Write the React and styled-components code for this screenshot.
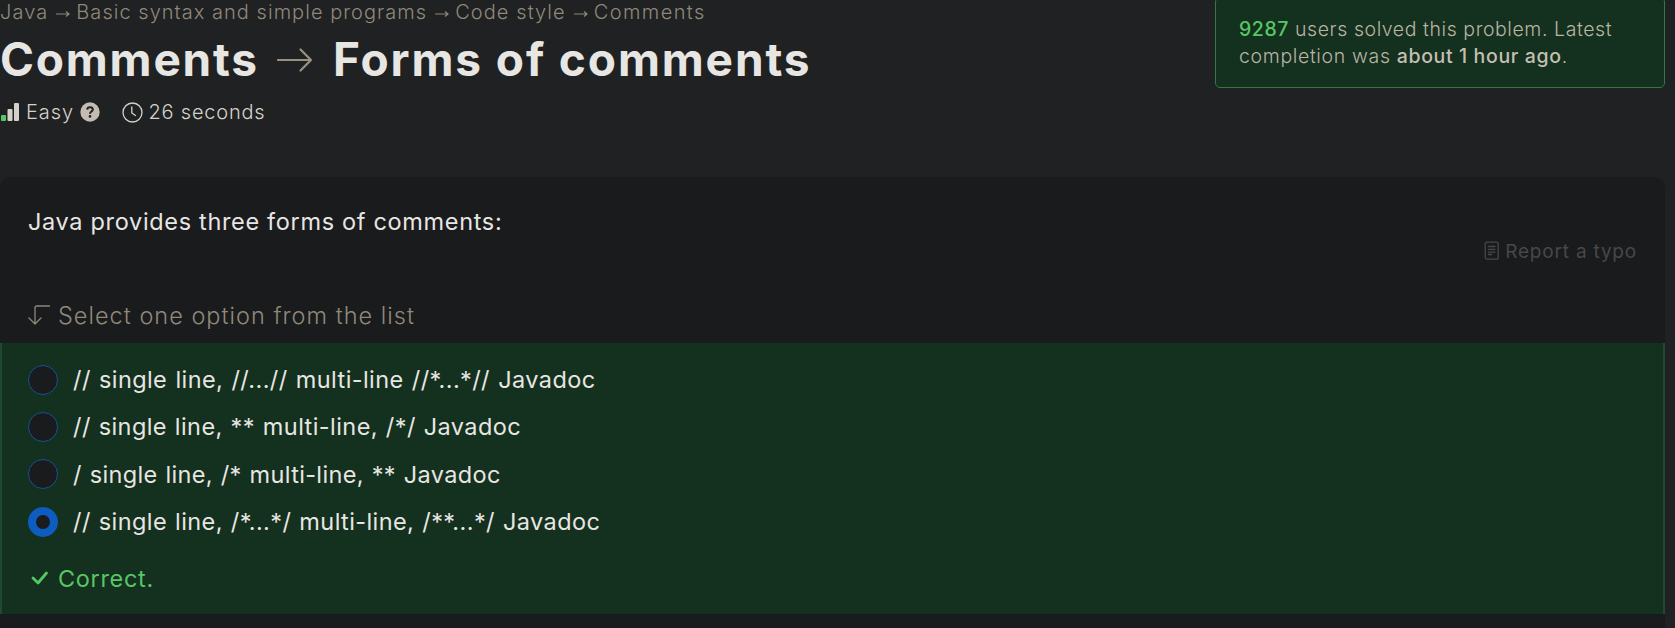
import React from "react";
import styled, { createGlobalStyle } from "styled-components";

const GlobalStyle = createGlobalStyle`
  * { box-sizing: border-box; }
  body {
    margin: 0;
    background: #1f2122;
    color: #e8e6e3;
    font-family: Inter, "Liberation Sans", sans-serif;
    overflow: hidden;
  }
`;

const Page = styled.main`
  width: 1665px;
  height: 628px;
  display: flex;
  flex-direction: column;
`;

const Header = styled.header`
  height: 177px;
  display: flex;
  justify-content: space-between;
  align-items: flex-start;
`;

const Text = styled.span`
  white-space: pre;
  letter-spacing: ${(p) => p.$ls || 0}px;
  word-spacing: ${(p) => p.$ws || 0}px;
`;

const Breadcrumbs = styled.nav`
  display: flex;
  align-items: center;
  height: 24px;
  font-size: 20px;
  line-height: 24px;
  font-weight: 300;
  color: #8f887b;
`;

const CrumbArrow = styled.svg`
  width: 14px;
  height: 8px;
  margin: 3px 6px 0 8px;
  flex: none;
`;

const Title = styled.h1`
  display: flex;
  align-items: center;
  margin: 8px 0 0;
  height: 54px;
  font-size: 46px;
  line-height: 54px;
  font-weight: 700;
`;

const TitleArrow = styled.svg`
  width: 37px;
  height: 26px;
  margin: 2px 19.5px 0 17.5px;
  flex: none;
`;

const Meta = styled.div`
  display: flex;
  align-items: center;
  margin-top: 13px;
  height: 26px;
  font-size: 20px;
  line-height: 26px;
  font-weight: 300;
  color: #d5d1ca;
`;

const MetaIcon = styled.svg`
  flex: none;
  margin-left: ${(p) => p.$left}px;
  margin-right: ${(p) => p.$right}px;
`;

const Notice = styled.aside`
  width: 450px;
  height: 91px;
  margin-top: -3px;
  padding: 18px 0 0 23px;
  background: #14301e;
  border: 1px solid #34793f;
  border-radius: 5px;
  font-size: 19.5px;
  line-height: 27px;
  font-weight: 300;
  color: #b9b4a4;
`;

const NoticeLine = styled.div`
  white-space: pre;
  letter-spacing: ${(p) => p.$ls || 0}px;
`;

const Count = styled.strong`
  font-weight: 500;
  color: #57c765;
`;

const When = styled.strong`
  font-weight: 500;
  color: #c4bfb2;
`;

const Card = styled.section`
  flex: 1;
  display: flex;
  flex-direction: column;
  background: #1a1b1d;
  border-radius: 11px 11px 0 0;
`;

const Question = styled.p`
  margin: 0;
  padding: 29px 0 0 28px;
  height: 60px;
  font-size: 23.5px;
  line-height: 32px;
  font-weight: 400;
`;

const Report = styled.div`
  display: flex;
  justify-content: flex-end;
  align-items: center;
  height: 28px;
  padding-right: 28px;
  font-size: 19px;
  color: #46484a;
`;

const ReportIcon = styled.svg`
  margin-right: 5px;
`;

const Prompt = styled.div`
  display: flex;
  align-items: center;
  height: 32px;
  margin: 34px 0 12px;
  padding-left: 28px;
  font-size: 23.5px;
  font-weight: 300;
  color: #8f887b;
`;

const PromptIcon = styled.svg`
  margin-right: 7px;
`;

const Answers = styled.div`
  height: 271px;
  padding: 13px 26px 0;
  background: #14301e;
  border: solid #1f4a2e;
  border-width: 0 2px;
`;

const Option = styled.label`
  display: flex;
  align-items: center;
  height: 47.3px;
  font-size: 23.5px;
`;

const Radio = styled.span`
  width: 30px;
  height: 30px;
  margin-right: 15px;
  flex: none;
  border-radius: 50%;
  background: #1a1b1d;
  border: ${(p) => (p.$checked ? "8px solid #0d5cbf" : "1px solid #175099")};
`;

const Result = styled.div`
  display: flex;
  align-items: center;
  height: 32px;
  margin-top: 17px;
  font-size: 23.5px;
  color: #57c765;
`;

const ResultIcon = styled.svg`
  margin: 0 9px 0 3px;
`;

const crumbs = [
  { text: "Java", ls: 1.1 },
  { text: "Basic syntax and simple programs", ls: 1.03 },
  { text: "Code style", ls: 1.08 },
  { text: "Comments", ls: 1.4 },
];

const options = [
  { text: "// single line, //...// multi-line //*...*// Javadoc", ls: 0.41, ws: 1.2 },
  { text: "// single line, ** multi-line, /*/ Javadoc", ls: 0.43, ws: 0.8 },
  { text: "/ single line, /* multi-line, ** Javadoc", ls: 0.35, ws: 0.9 },
  { text: "// single line, /*...*/ multi-line, /**...*/ Javadoc", ls: 0.41, ws: 1, checked: true },
];

export default function App() {
  return (
    <Page>
      <GlobalStyle />
      <Header>
        <div>
          <Breadcrumbs>
            {crumbs.map((c, i) => (
              <React.Fragment key={c.text}>
                {i > 0 && (
                  <CrumbArrow viewBox="0 0 14 8" fill="none" stroke="currentColor" strokeWidth="1.2">
                    <path d="M0 4H13M10 1.5L13 4L10 6.5" />
                  </CrumbArrow>
                )}
                <Text $ls={c.ls}>{c.text}</Text>
              </React.Fragment>
            ))}
          </Breadcrumbs>
          <Title>
            <Text $ls={1.8}>Comments</Text>
            <TitleArrow viewBox="0 0 37 26" fill="none" stroke="#9b9182" strokeWidth="2.2" strokeLinecap="round" strokeLinejoin="round">
              <path d="M2 13H35M24.5 2.5L35 13L24.5 23.5" />
            </TitleArrow>
            <Text $ls={1.88}>Forms of comments</Text>
          </Title>
          <Meta>
            <MetaIcon $left={1} $right={6} width="19" height="18" viewBox="0 0 19 18">
              <rect x="0" y="12" width="5" height="6" rx="1" fill="#57c765" />
              <rect x="6.5" y="6" width="5" height="12" rx="1" fill="#d5d1ca" />
              <rect x="13" y="0" width="5" height="18" rx="1" fill="#d5d1ca" />
            </MetaIcon>
            <Text $ls={0.9}>Easy</Text>
            <MetaIcon $left={6.5} $right={22} width="20" height="20" viewBox="0 0 20 20">
              <circle cx="10" cy="10" r="9.7" fill="#c4bcb3" />
              <path d="M7.2 7.6C7.3 4.4 12.8 4.4 12.8 7.6C12.8 9.6 10 9.5 10 11.8" fill="none" stroke="#1f2122" strokeWidth="2" />
              <circle cx="10" cy="14.4" r="1.3" fill="#1f2122" />
            </MetaIcon>
            <MetaIcon $left={0} $right={5} width="21" height="21" viewBox="0 0 21 21" fill="none" stroke="#d5d1ca" strokeWidth="1.3" strokeLinecap="round">
              <circle cx="10.5" cy="10.5" r="9.5" />
              <path d="M9.8 5V11L13.5 13.5" />
            </MetaIcon>
            <Text $ls={0.8}>26 seconds</Text>
          </Meta>
        </div>
        <Notice>
          <NoticeLine $ls={0.57}>
            <Count>9287</Count> users solved this problem. Latest
          </NoticeLine>
          <NoticeLine $ls={0.64}>
            completion was <When>about 1 hour ago</When>.
          </NoticeLine>
        </Notice>
      </Header>
      <Card>
        <Question>
          <Text $ls={0.67}>Java provides three forms of comments:</Text>
        </Question>
        <Report>
          <ReportIcon width="16" height="20" viewBox="0 0 16 20" fill="none" stroke="currentColor" strokeWidth="1.3" strokeLinecap="round">
            <rect x="1.2" y="1.2" width="13" height="17" rx="2" />
            <path d="M4.5 5.5H11M4.5 8.3H11M4.5 11.1H11M4.5 13.5H7.5" />
          </ReportIcon>
          <Text $ls={0.8}>Report a typo</Text>
        </Report>
        <Prompt>
          <PromptIcon width="23" height="22" viewBox="0 0 23 22" fill="none" stroke="currentColor" strokeWidth="1.3" strokeLinecap="round" strokeLinejoin="round">
            <path d="M21.5 2H9Q7 2 7 4V20M1 14L7 20L13 14" />
          </PromptIcon>
          <Text $ls={1.01}>Select one option from the list</Text>
        </Prompt>
        <Answers>
          {options.map((o) => (
            <Option key={o.text}>
              <Radio $checked={o.checked} />
              <Text $ls={o.ls} $ws={o.ws}>{o.text}</Text>
            </Option>
          ))}
          <Result>
            <ResultIcon width="18" height="14" viewBox="0 0 18 14" fill="none" stroke="currentColor" strokeWidth="2.8" strokeLinecap="round" strokeLinejoin="round">
              <path d="M2 7L7 12L15.5 2" />
            </ResultIcon>
            <Text $ls={0.67}>Correct.</Text>
          </Result>
        </Answers>
      </Card>
    </Page>
  );
}
